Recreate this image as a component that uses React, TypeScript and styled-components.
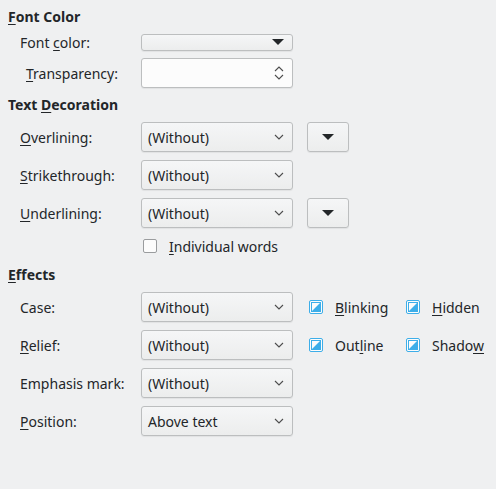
import React from 'react';
import styled, { createGlobalStyle } from 'styled-components';

const Global = createGlobalStyle`
body{margin:0;background:#eff0f1;font-family:"Noto Sans",sans-serif;font-size:14px;color:#232629;}
`;
const Page = styled.div`
width:496px;height:489px;box-sizing:border-box;padding:7px 0 0 8px;
`;
const Heading = styled.div<{ $mt?: number }>`
font-weight:bold;height:20px;line-height:20px;margin-top:${p => p.$mt ?? 0}px;
`;
const Row = styled.div<{ $h: number; $indent?: number }>`
display:flex;align-items:center;height:${p => p.$h}px;padding-left:${p => 12 + (p.$indent ?? 0)}px;
`;
const Label = styled.div<{ $indent?: number }>`
width:${p => 121 - (p.$indent ?? 0)}px;flex:none;
`;
const Combo = styled.div<{ $w?: number; $h?: number; $bg?: string }>`
width:${p => p.$w ?? 152}px;height:${p => p.$h ?? 30}px;box-sizing:border-box;
border:1px solid #bcbebf;border-radius:3px;background:${p => p.$bg ?? 'linear-gradient(#f5f6f7,#eceded)'};
display:flex;align-items:center;justify-content:space-between;padding:0 8px 0 6px;flex:none;
box-shadow:0 1px 1px rgba(0,0,0,0.06);
`;
const Tri = styled.span`
width:0;height:0;border-left:6px solid transparent;border-right:6px solid transparent;border-top:6px solid #232629;
`;
const Check = styled.span<{ $on?: boolean }>`
width:14px;height:14px;box-sizing:border-box;border:1px solid ${p => p.$on ? '#3daee9' : '#9a9c9e'};
border-radius:2px;background:#fcfcfc;flex:none;display:inline-flex;align-items:center;justify-content:center;
`;
const CheckItem = styled.div<{ $w: number }>`
display:flex;align-items:center;gap:12px;width:${p => p.$w}px;
`;
const Chevron = () => (
  <svg width="10" height="6" viewBox="0 0 10 6"><path d="M1 1l4 4 4-4" fill="none" stroke="#4d4d4d" strokeWidth="1.1" /></svg>
);
const TriState = () => (
  <Check $on><svg width="10" height="10" viewBox="0 0 10 10"><rect x="0.5" y="0.5" width="9" height="9" fill="none" stroke="#3daee9" /><path d="M9 1V9H1Z" fill="#3daee9" /></svg></Check>
);
const U = styled.u`text-underline-offset:2px;`;

const Sel = ({ text }: { text: string }) => <Combo><span>{text}</span><Chevron /></Combo>;
const ColorBtn = () => <Combo $w={42} style={{ marginLeft: 14, justifyContent: 'center', padding: 0 }}><Tri /></Combo>;

export default function App() {
  return <Page>
    <Global />
    <Heading><U>F</U>ont Color</Heading>
    <Row $h={30}><Label>Font <U>c</U>olor:</Label><Combo $h={17}><span /><Tri /></Combo></Row>
    <Row $h={32} $indent={6}><Label $indent={6}><U>T</U>ransparency:</Label>
      <Combo $bg="#fcfcfc">
        <span />
        <svg width="10" height="16" viewBox="0 0 10 16"><path d="M1 6l4-4 4 4M1 10l4 4 4-4" fill="none" stroke="#4d4d4d" strokeWidth="1.1" /></svg>
      </Combo></Row>
    <Heading $mt={6}>Text <U>D</U>ecoration</Heading>
    <Row $h={38} style={{ marginTop: 3 }}><Label><U>O</U>verlining:</Label><Sel text="(Without)" /><ColorBtn /></Row>
    <Row $h={38}><Label><U>S</U>trikethrough:</Label><Sel text="(Without)" /></Row>
    <Row $h={38}><Label><U>U</U>nderlining:</Label><Sel text="(Without)" /><ColorBtn /></Row>
    <Row $h={28}><Label /><CheckItem $w={200} style={{ marginLeft: 2 }}><Check /><span><U>I</U>ndividual words</span></CheckItem></Row>
    <Heading $mt={5}><U>E</U>ffects</Heading>
    <Row $h={38} style={{ marginTop: 3 }}><Label>Case:</Label><Sel text="(Without)" />
      <CheckItem $w={97} style={{ marginLeft: 16 }}><TriState /><span><U>B</U>linking</span></CheckItem>
      <CheckItem $w={80}><TriState /><span><U>H</U>idden</span></CheckItem></Row>
    <Row $h={38}><Label><U>R</U>elief:</Label><Sel text="(Without)" />
      <CheckItem $w={97} style={{ marginLeft: 16 }}><TriState /><span>Out<U>l</U>ine</span></CheckItem>
      <CheckItem $w={80}><TriState /><span>Shado<U>w</U></span></CheckItem></Row>
    <Row $h={38}><Label>Emphasis mark:</Label><Sel text="(Without)" /></Row>
    <Row $h={38}><Label><U>P</U>osition:</Label><Sel text="Above text" /></Row>
  </Page>;
}
